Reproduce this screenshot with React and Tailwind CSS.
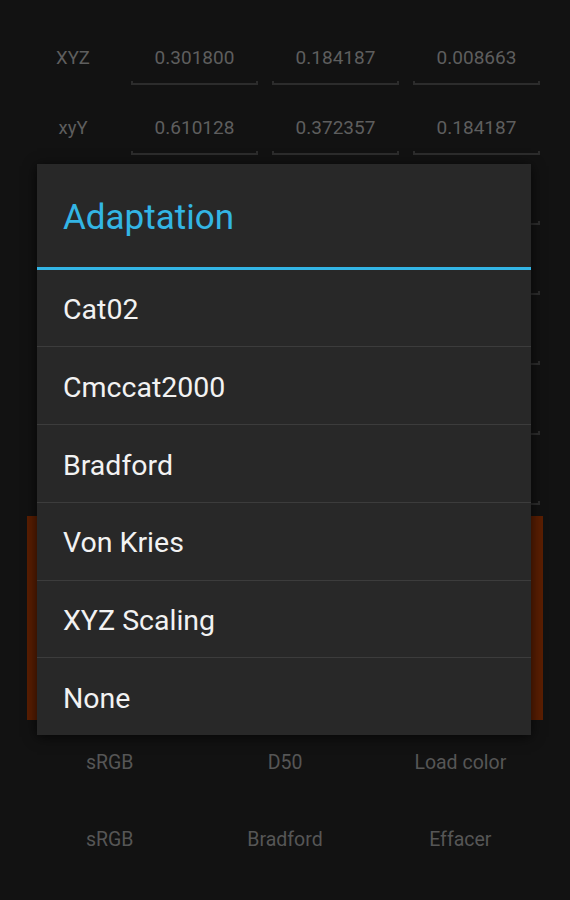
import React from "react";

const rows = [
  ["XYZ", "0.301800", "0.184187", "0.008663"],
  ["xyY", "0.610128", "0.372357", "0.184187"],
  ["", "", "", ""],
  ["", "", "", ""],
  ["", "", "", ""],
  ["", "", "", ""],
  ["", "", "", ""],
];

const items = ["Cat02", "Cmccat2000", "Bradford", "Von Kries", "XYZ Scaling", "None"];

function Field({ value }) {
  return (
    <div className="w-[127px] flex flex-col">
      <div className="h-[24px] leading-[24px] text-center text-[19px] text-[#5e5e5e]">{value}</div>
      <div className="mt-[11px] h-[4px] border-b-2 border-x-2 border-[#2c2c2c]" />
    </div>
  );
}

export default function App() {
  return (
    <div
      className="relative w-[570px] h-[900px] bg-[#121212] overflow-hidden"
      style={{ fontFamily: "Roboto, 'Noto Sans', sans-serif" }}
    >
      <div className="pt-[20px] flex flex-col">
        {rows.map((r, i) => (
          <div key={i} className="h-[70px] pt-[26px] flex">
            <div className="w-[131px] pl-[15px] h-[24px] leading-[24px] text-center text-[18.5px] text-[#5e5e5e]">{r[0]}</div>
            <div className="flex gap-[14px]">
              <Field value={r[1]} />
              <Field value={r[2]} />
              <Field value={r[3]} />
            </div>
          </div>
        ))}
      </div>
      <div className="mt-[6px] mx-[27px] h-[204px] bg-[#5a1e02]" />
      <div className="px-[22px] grid grid-cols-3 text-[19.5px] text-[#565656] text-center">
        <div className="h-[86px] flex items-center justify-center">sRGB</div>
        <div className="h-[86px] flex items-center justify-center">D50</div>
        <div className="h-[86px] flex items-center justify-center">Load color</div>
        <div className="h-[68px] flex items-center justify-center">sRGB</div>
        <div className="h-[68px] flex items-center justify-center">Bradford</div>
        <div className="h-[68px] flex items-center justify-center">Effacer</div>
      </div>

      <div className="absolute left-[37px] top-[164px] w-[494px] h-[571px] bg-[#282828] shadow-[0_2px_12px_rgba(0,0,0,0.7)] flex flex-col">
        <div className="h-[103px] flex items-center pt-[6px] px-[26px] text-[35px] text-[#33b5e5]">Adaptation</div>
        <div className="h-[3px] bg-[#33b5e5]" />
        {items.map((it, i) => (
          <div key={it} className={"flex items-center pt-[5px] px-[26px] text-[28.5px] text-[#f2f2f2] " + (i < items.length - 1 ? "border-b border-[#3c3c3c] h-[78px]" : "h-[77px]")}>
            {it}
          </div>
        ))}
      </div>
    </div>
  );
}
